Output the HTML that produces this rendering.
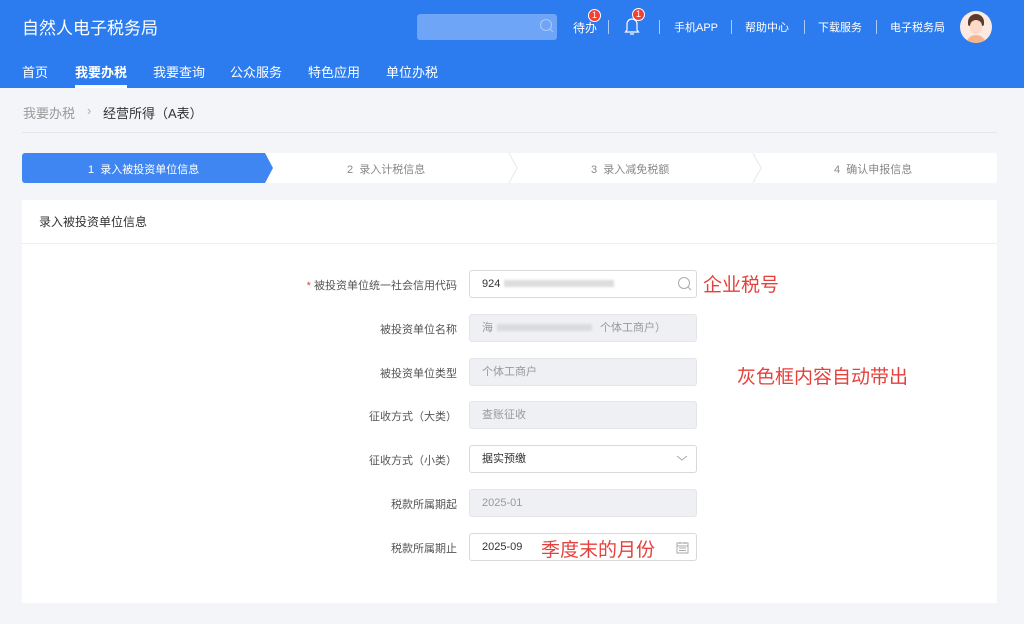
<!DOCTYPE html>
<html><head><meta charset="utf-8"><style>
*{margin:0;padding:0;box-sizing:border-box}
body{width:1024px;height:624px;background:#f3f5f8;font-family:"Liberation Sans","Noto Sans CJK SC",sans-serif;position:relative;overflow:hidden;color:#333}
.a{position:absolute;white-space:nowrap}
.hdr{position:absolute;left:0;top:0;width:1024px;height:88px;background:#2c7cf0}
.w{color:#fff}
.sep{position:absolute;width:1px;height:14px;background:rgba(255,255,255,.6);top:20px}
.badge{position:absolute;width:13px;height:13px;border-radius:50%;background:#f04134;border:1px solid #fff;color:#fff;font-size:9px;line-height:11px;text-align:center}
.lbl{position:absolute;right:567px;font-size:11px;color:#555;white-space:nowrap}
.in{position:absolute;left:469px;width:228px;height:28px;border:1px solid #d9d9d9;border-radius:3px;font-size:11px;padding-left:12px;line-height:26px;color:#333;background:#fff}
.g{background:#eef0f3;color:#999;border-color:#e3e5e8}
.red{position:absolute;color:#e5413c;font-size:19px;white-space:nowrap}
</style></head><body>
<div class="hdr">
<div class="a w" style="left:22px;top:14px;font-size:17px">自然人电子税务局</div>
<div class="a" style="left:417px;top:14px;width:140px;height:26px;background:#6ea5f6;border-radius:3px"></div>
<svg class="a" style="left:539px;top:18px" width="16" height="16" viewBox="0 0 16 16"><circle cx="7" cy="7" r="5.5" fill="none" stroke="#a9c9fa" stroke-width="1.1"/><path d="M11 11l3 3" stroke="#a9c9fa" stroke-width="1.1"/></svg>
<div class="a w" style="left:573px;top:19px;font-size:12px">待办</div>
<div class="badge" style="left:588px;top:9px">1</div>
<div class="sep" style="left:608px"></div>
<svg class="a" style="left:624px;top:16px" width="16" height="20" viewBox="0 0 16 20"><path d="M3 14V8a5 5 0 0 1 10 0v6l1.5 2h-13z M6 18h4" fill="none" stroke="#fff" stroke-width="1.2"/></svg>
<div class="badge" style="left:632px;top:8px">1</div>
<div class="sep" style="left:659px"></div>
<div class="a w" style="left:674px;top:19px;font-size:11px">手机APP</div>
<div class="sep" style="left:731px"></div>
<div class="a w" style="left:745px;top:19px;font-size:11px">帮助中心</div>
<div class="sep" style="left:804px"></div>
<div class="a w" style="left:818px;top:19px;font-size:11px">下载服务</div>
<div class="sep" style="left:876px"></div>
<div class="a w" style="left:890px;top:19px;font-size:11px">电子税务局</div>
<div class="a" style="left:960px;top:11px;width:32px;height:32px;border-radius:50%;background:#fbe9e2;overflow:hidden"><div style="position:absolute;left:8px;top:3px;width:16px;height:12px;background:#5a3a2a;border-radius:8px 8px 2px 2px"></div><div style="position:absolute;left:10px;top:9px;width:12px;height:14px;background:#fcd9c8;border-radius:6px"></div><div style="position:absolute;left:6px;top:24px;width:20px;height:10px;background:#f5b48c;border-radius:10px 10px 0 0"></div></div>
<div class="a w" style="left:22px;top:62px;font-size:13px">首页</div>
<div class="a w" style="left:75px;top:62px;font-size:13px;font-weight:bold">我要办税</div>
<div class="a" style="left:75px;top:85px;width:52px;height:3px;background:#fff"></div>
<div class="a w" style="left:153px;top:62px;font-size:13px">我要查询</div>
<div class="a w" style="left:230px;top:62px;font-size:13px">公众服务</div>
<div class="a w" style="left:308px;top:62px;font-size:13px">特色应用</div>
<div class="a w" style="left:386px;top:62px;font-size:13px">单位办税</div>
</div>
<div class="a" style="left:23px;top:103px;font-size:13px;color:#999">我要办税</div>
<div class="a" style="left:87px;top:103px;font-size:13px;color:#aaa">›</div>
<div class="a" style="left:103px;top:103px;font-size:13px;color:#333">经营所得（A表）</div>
<div class="a" style="left:22px;top:132px;width:975px;height:1px;background:#e3e6ea"></div>
<svg class="a" style="left:22px;top:153px" width="975" height="30" viewBox="0 0 975 30">
<rect width="975" height="30" rx="3" fill="#fff"/>
<path d="M3 0H243L251 15L243 30H3A3 3 0 0 1 0 27V3A3 3 0 0 1 3 0z" fill="#3f86f2"/>
<path d="M487 0l8 15l-8 15M731 0l8 15l-8 15" fill="none" stroke="#e6e8ec"/>
</svg>
<div class="a" style="left:88px;top:161px;font-size:11px;color:#fff">1&nbsp;&nbsp;录入被投资单位信息</div>
<div class="a" style="left:347px;top:161px;font-size:11px;color:#888">2&nbsp;&nbsp;录入计税信息</div>
<div class="a" style="left:591px;top:161px;font-size:11px;color:#888">3&nbsp;&nbsp;录入减免税额</div>
<div class="a" style="left:834px;top:161px;font-size:11px;color:#888">4&nbsp;&nbsp;确认申报信息</div>
<div class="a" style="left:22px;top:200px;width:975px;height:403px;background:#fff"></div>
<div class="a" style="left:39px;top:213px;font-size:12px;color:#333">录入被投资单位信息</div>
<div class="a" style="left:22px;top:243px;width:975px;height:1px;background:#eceef1"></div>
<div class="lbl" style="top:277px"><span style="color:#f04134">* </span>被投资单位统一社会信用代码</div>
<div class="in" style="top:270px">924<span style="display:inline-block;width:110px;height:7px;background:#ddd;margin-left:4px;filter:blur(1px)"></span></div>
<svg class="a" style="left:677px;top:276px" width="16" height="16" viewBox="0 0 16 16"><circle cx="7" cy="7" r="5.5" fill="none" stroke="#aaa"/><path d="M11 11l3 3" stroke="#aaa"/></svg>
<div class="red" style="left:703px;top:270px">企业税号</div>
<div class="lbl" style="top:321px">被投资单位名称</div>
<div class="in g" style="top:314px">海<span style="display:inline-block;width:95px;height:7px;background:#d9dbde;margin:0 8px 0 4px;filter:blur(1px)"></span>个体工商户）</div>
<div class="lbl" style="top:365px">被投资单位类型</div>
<div class="in g" style="top:358px">个体工商户</div>
<div class="red" style="left:737px;top:362px">灰色框内容自动带出</div>
<div class="lbl" style="top:408px">征收方式（大类）</div>
<div class="in g" style="top:401px">查账征收</div>
<div class="lbl" style="top:452px">征收方式（小类）</div>
<div class="in" style="top:445px">据实预缴</div>
<svg class="a" style="left:676px;top:453px" width="12" height="10" viewBox="0 0 12 10"><path d="M1 3l5 4l5-4" fill="none" stroke="#aaa"/></svg>
<div class="lbl" style="top:496px">税款所属期起</div>
<div class="in g" style="top:489px">2025-01</div>
<div class="lbl" style="top:540px">税款所属期止</div>
<div class="in" style="top:533px">2025-09</div>
<svg class="a" style="left:676px;top:541px" width="13" height="13" viewBox="0 0 13 13"><rect x="1" y="2" width="11" height="10" fill="none" stroke="#aaa"/><path d="M1 5h11M4 1v2M9 1v2M3 7h7M3 9.5h7" stroke="#aaa"/></svg>
<div class="red" style="left:541px;top:535px">季度末的月份</div>
</body></html>
